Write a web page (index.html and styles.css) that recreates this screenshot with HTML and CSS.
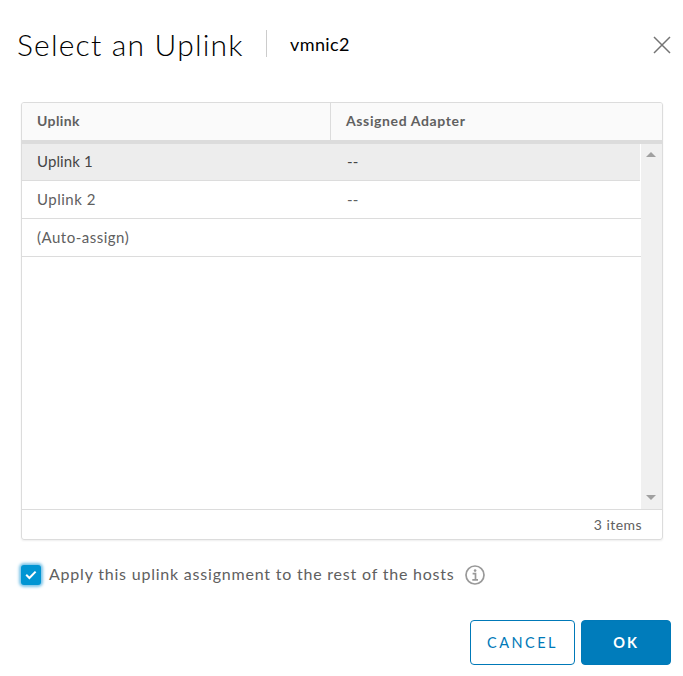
FILE: index.html
```
<!DOCTYPE html>
<html lang="en">
<head>
<meta charset="utf-8">
<title>Select an Uplink</title>
<link rel="stylesheet" href="styles.css">
</head>
<body>
<main class="dialog">
  <header class="dialog-header">
    <h1 class="title">Select an Uplink</h1>
    <span class="subject">vmnic2</span>
    <button class="close" aria-label="Close"><svg width="18" height="18" viewBox="0 0 18 18"><path d="M1 1 17 17M17 1 1 17"/></svg></button>
  </header>
  <section class="grid">
    <div class="grid-head">
      <div class="head-cell first"><span class="head-uplink">Uplink</span></div>
      <div class="head-cell"><span class="head-adapter">Assigned Adapter</span></div>
    </div>
    <div class="grid-body">
      <div class="rows">
        <div class="row selected"><span class="cell first">Uplink 1</span><span class="cell">--</span></div>
        <div class="row"><span class="cell first wide">Uplink 2</span><span class="cell">--</span></div>
        <div class="row"><span class="cell first wide">(Auto-assign)</span></div>
      </div>
      <div class="scrollbar">
        <svg width="10" height="5" viewBox="0 0 10 5"><path d="M0 5 5 0 10 5Z"/></svg>
        <svg width="10" height="5" viewBox="0 0 10 5"><path d="M0 0H10L5 5Z"/></svg>
      </div>
    </div>
    <footer class="grid-foot">3 items</footer>
  </section>
  <div class="apply">
    <span class="checkbox"><svg width="12" height="10" viewBox="0 0 12 10"><path d="M1.2 4.8 4.4 8 10.6 1.6"/></svg></span>
    <span class="apply-label">Apply this uplink assignment to the rest of the hosts</span>
    <svg class="info" width="20" height="20" viewBox="0 0 20 20"><circle cx="10" cy="10" r="9"/><path d="M7.6 8.6H10.5V14.6M7.3 14.8H13"/><circle class="dot" cx="10.1" cy="5.6" r="1.3"/></svg>
  </div>
  <div class="actions">
    <button class="btn cancel">CANCEL</button>
    <button class="btn ok">OK</button>
  </div>
</main>
</body>
</html>
```
FILE: styles.css
```
* { box-sizing: border-box; }
body { margin: 0; background: #fff; color: #606060; font-family: Lato, "Liberation Sans", sans-serif; }
.dialog { width: 683px; height: 676px; padding: 26px 12px 0 21px; }
.dialog-header { display: flex; align-items: center; height: 38px; margin-left: -4px; }
.title { margin: 0 0 3px; width: 249px; font-size: 30px; font-weight: 300; line-height: 38px; letter-spacing: 1.2px; color: #000; white-space: nowrap; }
.subject { height: 27px; margin-top: -3px; border-left: 1px solid #ccc; padding-left: 23px; font-size: 18px; line-height: 29px; letter-spacing: 0.4px; color: #000; }
.close { margin-left: auto; width: 18px; height: 18px; padding: 0; border: 0; background: none; }
.close svg { display: block; fill: none; stroke: #747474; stroke-width: 1.5; }
.grid { display: flex; flex-direction: column; width: 642px; height: 438px; margin-top: 38px; border: 1px solid #dcdcdc; border-radius: 3px; box-shadow: 0 1px 2px #eee; font-size: 15px; }
.grid-head { display: flex; height: 41px; background: #fafafa; border-bottom: 4px solid #dcdcdc; border-radius: 2px 2px 0 0; font-size: 14px; font-weight: 700; }
.head-cell { flex: 1; padding-left: 15px; line-height: 35px; }
.head-cell.first { flex: none; width: 309px; border-right: 1px solid #dcdcdc; }
.head-uplink { letter-spacing: 0.4px; }
.head-adapter { letter-spacing: 0.62px; }
.grid-body { display: flex; flex: 1; }
.rows { flex: 1; }
.row { display: flex; height: 38px; border-bottom: 1px solid #dcdcdc; line-height: 37px; }
.row.selected { height: 37px; margin-right: 1px; background: #ededed; color: #454545; line-height: 34px; }
.cell { padding-left: 15px; letter-spacing: 0.1px; }
.cell.wide { letter-spacing: 0.5px; }
.cell.first { width: 310px; }
.scrollbar { display: flex; flex-direction: column; align-items: center; justify-content: space-between; width: 21px; padding: 8px 1px 9px 0; background: #f0f0f0; }
.scrollbar svg { fill: #a0a0a0; }
.grid-foot { height: 30px; border-top: 1px solid #dcdcdc; padding-right: 20px; line-height: 29px; text-align: right; font-size: 14px; letter-spacing: 0.45px; }
.apply { display: flex; align-items: center; height: 24px; margin-top: 22px; }
.checkbox { display: flex; align-items: center; justify-content: center; width: 20px; height: 20px; margin-top: 1px; border-radius: 3px; background: #0095d3; box-shadow: 0 0 3px 2px #7cc4e8; }
.checkbox svg { fill: none; stroke: #fff; stroke-width: 2; }
.apply-label { width: 417px; margin-bottom: 2px; padding-left: 8px; font-size: 16px; letter-spacing: 0.79px; white-space: nowrap; }
.info { margin: 1px 0 0 7px; fill: none; stroke: #999; stroke-width: 1.7; }
.info .dot { fill: #999; stroke: none; }
.actions { display: flex; justify-content: flex-end; gap: 6px; margin-top: 34px; }
.btn { height: 45px; padding: 0; border: 1px solid #0079b8; border-radius: 4px; font: 400 14.5px/43px Lato, sans-serif; }
.cancel { width: 105px; background: #fff; color: #0079b8; letter-spacing: 2.5px; }
.ok { width: 90px; background: #007cbb; color: #fff; font-weight: 700; letter-spacing: 2px; }
```
